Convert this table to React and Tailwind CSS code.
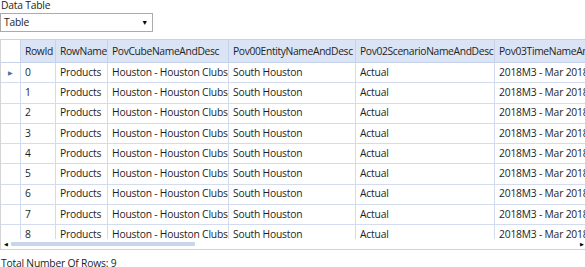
const columns = [
  { key: "id", label: "RowId", w: "w-[35px]" },
  { key: "name", label: "RowName", w: "w-[52px]" },
  { key: "cube", label: "PovCubeNameAndDesc", w: "w-[121px]" },
  { key: "entity", label: "Pov00EntityNameAndDesc", w: "w-[127px]" },
  { key: "scenario", label: "Pov02ScenarioNameAndDesc", w: "w-[139px]" },
  { key: "time", label: "Pov03TimeNameAndDesc", w: "w-[140px]" },
];

const rows = Array.from({ length: 9 }, (_, i) => ({
  id: String(i),
  name: "Products",
  cube: "Houston - Houston Clubs",
  entity: "South Houston",
  scenario: "Actual",
  time: "2018M3 - Mar 2018",
}));

export default function App() {
  return (
    <div
      className="w-[585px] h-[267px] overflow-hidden bg-white text-[10.3px] tracking-[-0.2px] text-[#1e1e1e]"
      style={{ fontFamily: '"Segoe UI", "Open Sans", sans-serif' }}
    >
      <div className="h-[12px] leading-[10px] pl-[1px]">Data Table</div>

      <div className="mt-[1px] flex h-[19px] w-[153px] items-center justify-between border border-[#ababab] bg-white pl-[3px] pr-[4px]">
        <span className="leading-none">Table</span>
        <span className="text-[7px] leading-none text-black">▼</span>
      </div>

      <div className="mt-[7px] h-[211px] w-[600px] border-l border-b border-[#d4d4d4]">
        <div className="h-[200px] overflow-hidden">
          {/* header */}
          <div className="flex h-[24px] border-t border-b border-[#c5d2ea] tracking-[-0.35px]">
            <div className="w-[20px] shrink-0 bg-white border-r border-[#c5d2ea]" />
            {columns.map((c) => (
              <div
                key={c.key}
                className={`${c.w} shrink-0 bg-[#dbe4f4] border-r border-[#c5d2ea] flex items-center pl-[4px] pt-[1px] whitespace-nowrap overflow-hidden`}
              >
                {c.label}
              </div>
            ))}
          </div>

          {rows.map((r, i) => (
            <div key={r.id} className="flex h-[20.25px] border-b border-[#d3dcef]">
              <div className="w-[20px] shrink-0 border-r border-[#d3dcef] flex items-center justify-center">
                {i === 0 && <span className="text-[6px] leading-none text-[#4a6ea8]">▶</span>}
              </div>
              {columns.map((c) => (
                <div
                  key={c.key}
                  className={`${c.w} shrink-0 border-r border-[#d3dcef] flex items-center pl-[4px] whitespace-nowrap overflow-hidden`}
                >
                  {r[c.key]}
                </div>
              ))}
            </div>
          ))}
        </div>

        {/* horizontal scrollbar */}
        <div className="flex h-[10px] w-[585px] items-center">
          <span className="w-[10px] text-center text-[5px] leading-none text-black">◀</span>
          <div className="h-[4px] w-[184px] rounded-[1px] bg-[#c9d5ea]" />
          <div className="flex-1" />
          <span className="w-[9px] text-center text-[5px] leading-none text-black">▶</span>
        </div>
      </div>

      <div className="mt-[7px] leading-[12px] pl-[1px]">Total Number Of Rows: 9</div>
    </div>
  );
}
